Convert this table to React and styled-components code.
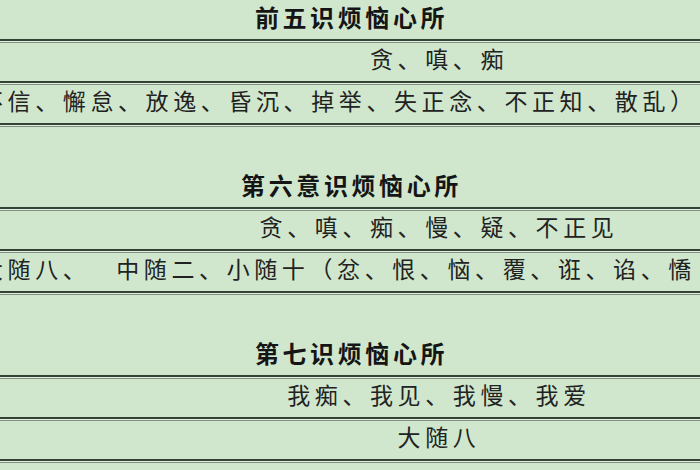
import React from 'react';
import styled, { createGlobalStyle } from 'styled-components';

const sections = [
	{
		title: '前五识烦恼心所',
		rows: [
			{ text: '贪、嗔、痴' },
			{ text: '不信、懈怠、放逸、昏沉、掉举、失正念、不正知、散乱）', start: -20 },
		],
	},
	{
		title: '第六意识烦恼心所',
		rows: [
			{ text: '贪、嗔、痴、慢、疑、不正见' },
			{ text: '大随八、　 中随二、小随十（忿、恨、恼、覆、诳、谄、憍', start: -20 },
		],
	},
	{
		title: '第七识烦恼心所',
		rows: [
			{ text: '我痴、我见、我慢、我爱' },
			{ text: '大随八' },
		],
	},
];

function App() {
	return (
		<>
			<GlobalStyle />
			<Sheet>
				{sections.map((section, i) => (
					<Section key={section.title} $first={i === 0}>
						<TitleCell>
							<Label>{section.title}</Label>
						</TitleCell>
						<Rule />
						{section.rows.map((row) => (
							<React.Fragment key={row.text}>
								<Cell $wide={row.start !== undefined}>
									<Label $start={row.start}>{row.text}</Label>
								</Cell>
								<Rule />
							</React.Fragment>
						))}
					</Section>
				))}
			</Sheet>
		</>
	);
}

const GlobalStyle = createGlobalStyle`
	html, body {
		margin: 0;
		padding: 0;
		background: #d0e7cd;
	}
	body {
		font-family: "Noto Sans CJK SC", "Noto Sans", sans-serif;
		color: #1c1c1c;
	}
`;

const Sheet = styled.div`
	width: 700px;
	height: 470px;
	overflow: hidden;
	background: #d0e7cd;
	padding-top: 1px;
	box-sizing: border-box;
`;

const Section = styled.section`
	display: flex;
	flex-direction: column;
	margin-top: ${(p) => (p.$first ? '0' : '42px')};
`;

const TitleCell = styled.div`
	height: 38px;
	display: flex;
	align-items: center;
	justify-content: center;
	padding-bottom: 7px;
	box-sizing: border-box;
	font-size: 24px;
	font-weight: 700;
	letter-spacing: 3.6px;
	padding-left: 3px;
	color: #151515;
`;

const Cell = styled.div`
	height: 38px;
	display: flex;
	align-items: center;
	justify-content: ${(p) => (p.$wide ? 'flex-start' : 'center')};
	padding-left: ${(p) => (p.$wide ? '0' : '178px')};
	padding-bottom: 7px;
	box-sizing: border-box;
	font-size: 23px;
	letter-spacing: 4.6px;
	white-space: pre;
	color: #222;
`;

const Label = styled.span`
	display: block;
	line-height: 1;
	margin-left: ${(p) => (p.$start !== undefined ? `${p.$start}px` : '0')};
`;

const Rule = styled.div`
	height: 1px;
	border-top: 2px solid #344434;
	border-bottom: 1px solid #7f917e;
	background: #e3efe0;
`;

export default App;
